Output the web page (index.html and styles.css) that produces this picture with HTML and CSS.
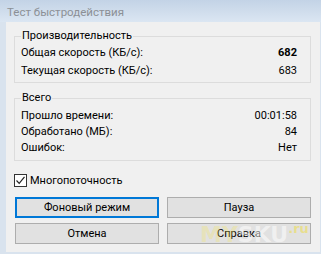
FILE: index.html
```html
<!DOCTYPE html>
<html lang="ru">
<head>
<meta charset="utf-8">
<title>Тест быстродействия</title>
<link rel="stylesheet" href="styles.css">
</head>
<body>
<div class="window">
  <div class="titlebar"><span class="title">Тест быстродействия</span></div>
  <div class="client">
    <fieldset class="group group-perf">
      <legend>Производительность</legend>
      <div class="row"><span>Общая скорость (КБ/с):</span><span class="val bold">682</span></div>
      <div class="row"><span>Текущая скорость (КБ/с):</span><span class="val">683</span></div>
    </fieldset>
    <fieldset class="group group-total">
      <legend>Всего</legend>
      <div class="row"><span>Прошло времени:</span><span class="val">00:01:58</span></div>
      <div class="row"><span>Обработано (МБ):</span><span class="val">84</span></div>
      <div class="row"><span>Ошибок:</span><span class="val">Нет</span></div>
    </fieldset>
    <label class="check">
      <span class="box"><svg width="11" height="11" viewBox="0 0 11 11"><path d="M1.5 5.5 L4.2 8.3 L9.5 1.8" fill="none" stroke="#222" stroke-width="1.2"/></svg></span>
      <span>Многопоточность</span>
    </label>
    <div class="buttons">
      <div class="btn default">Фоновый режим</div>
      <div class="btn">Пауза</div>
      <div class="btn">Отмена</div>
      <div class="btn">Справка</div>
    </div>
    <div class="watermark"><span class="wm-my">MY</span><span class="wm-sku">SKU</span><span class="wm-ru">.ru</span></div>
  </div>
</div>
</body>
</html>
```
FILE: styles.css
```css
* { box-sizing: border-box; }
html, body { margin: 0; padding: 0; }
body {
  width: 321px;
  height: 254px;
  overflow: hidden;
  font-family: Roboto, "Noto Sans", sans-serif;
  font-size: 11px;
  color: #000;
  background: #dbe5f0;
}
.window {
  width: 321px;
  height: 254px;
  display: flex;
  flex-direction: column;
  background: #d9e3ee;
}
.titlebar {
  height: 22px;
  flex: none;
  background: linear-gradient(#c3d3e6, #dbe6f2);
  padding-left: 7px;
  display: flex;
  align-items: center;
}
.title {
  color: #8c9096;
  font-size: 11.5px;
  line-height: 16px;
  padding-top: 2px;
}
.client {
  position: relative;
  flex: 1;
  margin: 0 1px 2px 6px;
  background: #f0f0f0;
  padding: 6px 9px 0 8px;
  display: flex;
  flex-direction: column;
}
.group {
  margin: 0;
  min-width: 0;
  border: 1px solid #dcdcdc;
  padding: 0 13px 2px 6px;
}
.group legend {
  padding: 0 1px;
  line-height: 16px;
}
.group-perf .row { height: 18px; }
.group-total { margin-top: 7px; padding-top: 2px; padding-bottom: 4px; }
.group-total .row { height: 16px; }
.row {
  display: flex;
  justify-content: space-between;
  align-items: center;
  line-height: 16px;
}
.bold { font-weight: bold; }
.check {
  display: flex;
  align-items: center;
  margin-top: 12px;
  height: 14px;
  gap: 3px;
}
.box {
  width: 13px;
  height: 13px;
  border: 1px solid #333;
  background: #fff;
  display: flex;
  align-items: center;
  justify-content: center;
}
.buttons {
  margin-top: 10px;
  margin-left: 1px;
  display: grid;
  grid-template-columns: 1fr 1fr;
  column-gap: 8px;
  row-gap: 5px;
}
.btn {
  height: 21px;
  background: #e1e1e1;
  border: 1px solid #adadad;
  display: flex;
  align-items: center;
  justify-content: center;
  line-height: 16px;
}
.btn.default { border: 2px solid #0078d7; }
.watermark {
  position: absolute;
  left: 194px;
  top: 195px;
  font-family: "DejaVu Sans", sans-serif;
  font-weight: bold;
  font-size: 22px;
  line-height: 24px;
  pointer-events: none;
}
.wm-my { color: rgba(245, 230, 90, 0.3); }
.wm-sku { color: rgba(255, 255, 255, 0.5); }
.wm-ru {
  font-size: 13px;
  color: rgba(240, 220, 60, 0.5);
  vertical-align: 9px;
}
```
